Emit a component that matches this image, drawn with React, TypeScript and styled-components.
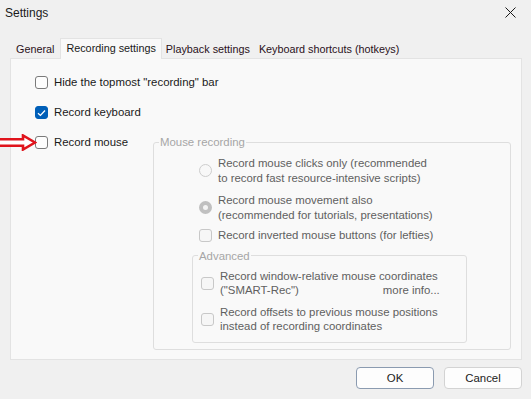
import React from 'react';
import styled, { createGlobalStyle } from 'styled-components';

const GlobalStyle = createGlobalStyle`
  html, body {
    margin: 0;
    padding: 0;
    background: #f0f0f0;
  }
  body {
    font-family: 'Liberation Sans', Arial, sans-serif;
    font-size: 11.4px;
    color: #1a1a1a;
  }
`;

const Window = styled.div`
  width: 531px;
  height: 399px;
  display: flex;
  flex-direction: column;
  background: #f0f0f0;
  overflow: hidden;
`;

const TitleBar = styled.div`
  height: 25px;
  display: flex;
  align-items: center;
  justify-content: space-between;
  padding: 0 15px 0 5px;
`;

const Title = styled.span`
  font-size: 12px;
  color: #1a1a1a;
`;

const Body = styled.div`
  padding: 13px 9px 0 10px;
  display: flex;
  flex-direction: column;
`;

const TabRow = styled.div`
  height: 20px;
  display: flex;
  align-items: flex-end;
  padding-left: 3px;
  position: relative;
  z-index: 1;
`;

const Tab = styled.div<{ $active?: boolean }>`
  height: ${(p) => (p.$active ? '21px' : '19px')};
  padding: ${(p) => (p.$active ? '0 5px 3px' : '0 5px 0 3px')};
  margin: ${(p) => (p.$active ? '0 1px -1px 0' : '0 1px 0 0')};
  display: flex;
  align-items: center;
  font-size: 10.8px;
  color: ${(p) => (p.$active ? '#1a1a1a' : '#2a1020')};
  background: ${(p) => (p.$active ? '#f9f9f9' : 'transparent')};
  border: ${(p) => (p.$active ? '1px solid #e3e3e3' : 'none')};
  border-bottom: none;
  box-sizing: border-box;
`;

const Panel = styled.div`
  height: 302px;
  box-sizing: border-box;
  background: #f9f9f9;
  border: 1px solid #e3e3e3;
  padding: 16px 0 0 24px;
  display: flex;
  flex-direction: column;
  gap: 15px;
`;

const Row = styled.label`
  display: flex;
  align-items: center;
  gap: 6px;
  line-height: 15px;
  color: #1a1a1a;
`;

const Box = styled.span<{ $checked?: boolean; $disabled?: boolean }>`
  width: 13px;
  height: 13px;
  flex: none;
  box-sizing: border-box;
  border-radius: 3px;
  border: 1px solid ${(p) => (p.$checked ? '#005fb8' : p.$disabled ? '#c8c8c8' : '#7a7a7a')};
  background: ${(p) => (p.$checked ? '#005fb8' : p.$disabled ? '#f6f6f6' : '#fdfdfd')};
  display: flex;
  align-items: center;
  justify-content: center;
`;

const Radio = styled.span<{ $checked?: boolean }>`
  width: 13px;
  height: 13px;
  flex: none;
  box-sizing: border-box;
  border-radius: 50%;
  border: ${(p) => (p.$checked ? '4px solid #c0c0c0' : '1px solid #cdcdcd')};
  background: ${(p) => (p.$checked ? '#f4f4f4' : '#f8f8f8')};
`;

const MouseRow = styled.div`
  display: flex;
  align-items: flex-start;
  position: relative;
`;

const MouseLabel = styled(Row)`
  width: 118px;
  flex: none;
`;

const Arrow = styled.svg`
  position: absolute;
  left: -35px;
  top: -1px;
`;

const Group = styled.fieldset<{ $width: number; $height: number }>`
  margin: 0;
  width: ${(p) => p.$width}px;
  height: ${(p) => p.$height}px;
  box-sizing: border-box;
  border: 1px solid #dedede;
  border-radius: 3px;
  padding: 0;
  display: flex;
  flex-direction: column;
`;

const Legend = styled.legend`
  color: #a6a6a6;
  padding: 0 1px;
  margin-left: 5px;
  line-height: 14px;
`;

const GroupBody = styled.div<{ $left: number }>`
  padding-left: ${(p) => p.$left}px;
  display: flex;
  flex-direction: column;
`;

const Item = styled.div<{ $top: number }>`
  display: flex;
  align-items: center;
  gap: 6px;
  margin-top: ${(p) => p.$top}px;
  color: #606060;
  line-height: 14.5px;
`;

const ItemText = styled.div`
  display: flex;
  flex-direction: column;
`;

const MoreInfo = styled.span`
  align-self: flex-end;
  margin-top: -14.5px;
  margin-right: -2px;
`;

const Footer = styled.div`
  display: flex;
  justify-content: flex-end;
  gap: 10px;
  padding: 7px 0 0 0;
`;

const Button = styled.button<{ $default?: boolean }>`
  width: 78px;
  height: 22px;
  font-family: 'Liberation Sans', Arial, sans-serif;
  font-size: 11.4px;
  color: #1a1a1a;
  background: #fdfdfd;
  border: 1px solid ${(p) => (p.$default ? '#8b9bb0' : '#d3d3d3')};
  border-radius: 4px;
  padding: 0;
`;

const Check = () => (
  <svg width="9" height="8" viewBox="0 0 9 8">
    <path d="M1 4.2 L3.4 6.4 L8 1.5" fill="none" stroke="#fff" strokeWidth="1.3" />
  </svg>
);

const CloseIcon = () => (
  <svg width="11" height="11" viewBox="0 0 11 11">
    <path d="M0.5 0.5 L10.5 10.5 M10.5 0.5 L0.5 10.5" stroke="#1a1a1a" strokeWidth="1" />
  </svg>
);

const App: React.FC = () => {
  return (
    <>
      <GlobalStyle />
      <Window>
        <TitleBar>
          <Title>Settings</Title>
          <CloseIcon />
        </TitleBar>
        <Body>
          <TabRow>
            <Tab>General</Tab>
            <Tab $active>Recording settings</Tab>
            <Tab>Playback settings</Tab>
            <Tab>Keyboard shortcuts (hotkeys)</Tab>
          </TabRow>
          <Panel>
            <Row>
              <Box />
              Hide the topmost "recording" bar
            </Row>
            <Row>
              <Box $checked>
                <Check />
              </Box>
              Record keyboard
            </Row>
            <MouseRow>
              <Arrow width="37" height="17" viewBox="0 0 37 17">
                <path
                  d="M0 5.2 H23 V1.5 L35 8.5 L23 15.5 V11.8 H0"
                  fill="#fff"
                  stroke="#e0141c"
                  strokeWidth="2.6"
                  strokeLinejoin="miter"
                />
              </Arrow>
              <MouseLabel>
                <Box />
                Record mouse
              </MouseLabel>
              <Group $width={358} $height={215}>
                <Legend>Mouse recording</Legend>
                <GroupBody $left={45}>
                  <Item $top={7}>
                    <Radio />
                    <ItemText>
                      <span>Record mouse clicks only (recommended</span>
                      <span>to record fast resource-intensive scripts)</span>
                    </ItemText>
                  </Item>
                  <Item $top={8}>
                    <Radio $checked />
                    <ItemText>
                      <span>Record mouse movement also</span>
                      <span>(recommended for tutorials, presentations)</span>
                    </ItemText>
                  </Item>
                  <Item $top={6}>
                    <Box $disabled />
                    <span>Record inverted mouse buttons (for lefties)</span>
                  </Item>
                </GroupBody>
                <GroupBody $left={38}>
                  <Group $width={275} $height={94} style={{ marginTop: 6 }}>
                    <Legend>Advanced</Legend>
                    <GroupBody $left={8}>
                      <Item $top={6}>
                        <Box $disabled />
                        <ItemText>
                          <span>Record window-relative mouse coordinates</span>
                          <span>("SMART-Rec")</span>
                          <MoreInfo>more info...</MoreInfo>
                        </ItemText>
                      </Item>
                      <Item $top={7}>
                        <Box $disabled />
                        <ItemText>
                          <span>Record offsets to previous mouse positions</span>
                          <span>instead of recording coordinates</span>
                        </ItemText>
                      </Item>
                    </GroupBody>
                  </Group>
                </GroupBody>
              </Group>
            </MouseRow>
          </Panel>
          <Footer>
            <Button $default>OK</Button>
            <Button>Cancel</Button>
          </Footer>
        </Body>
      </Window>
    </>
  );
};

export default App;
